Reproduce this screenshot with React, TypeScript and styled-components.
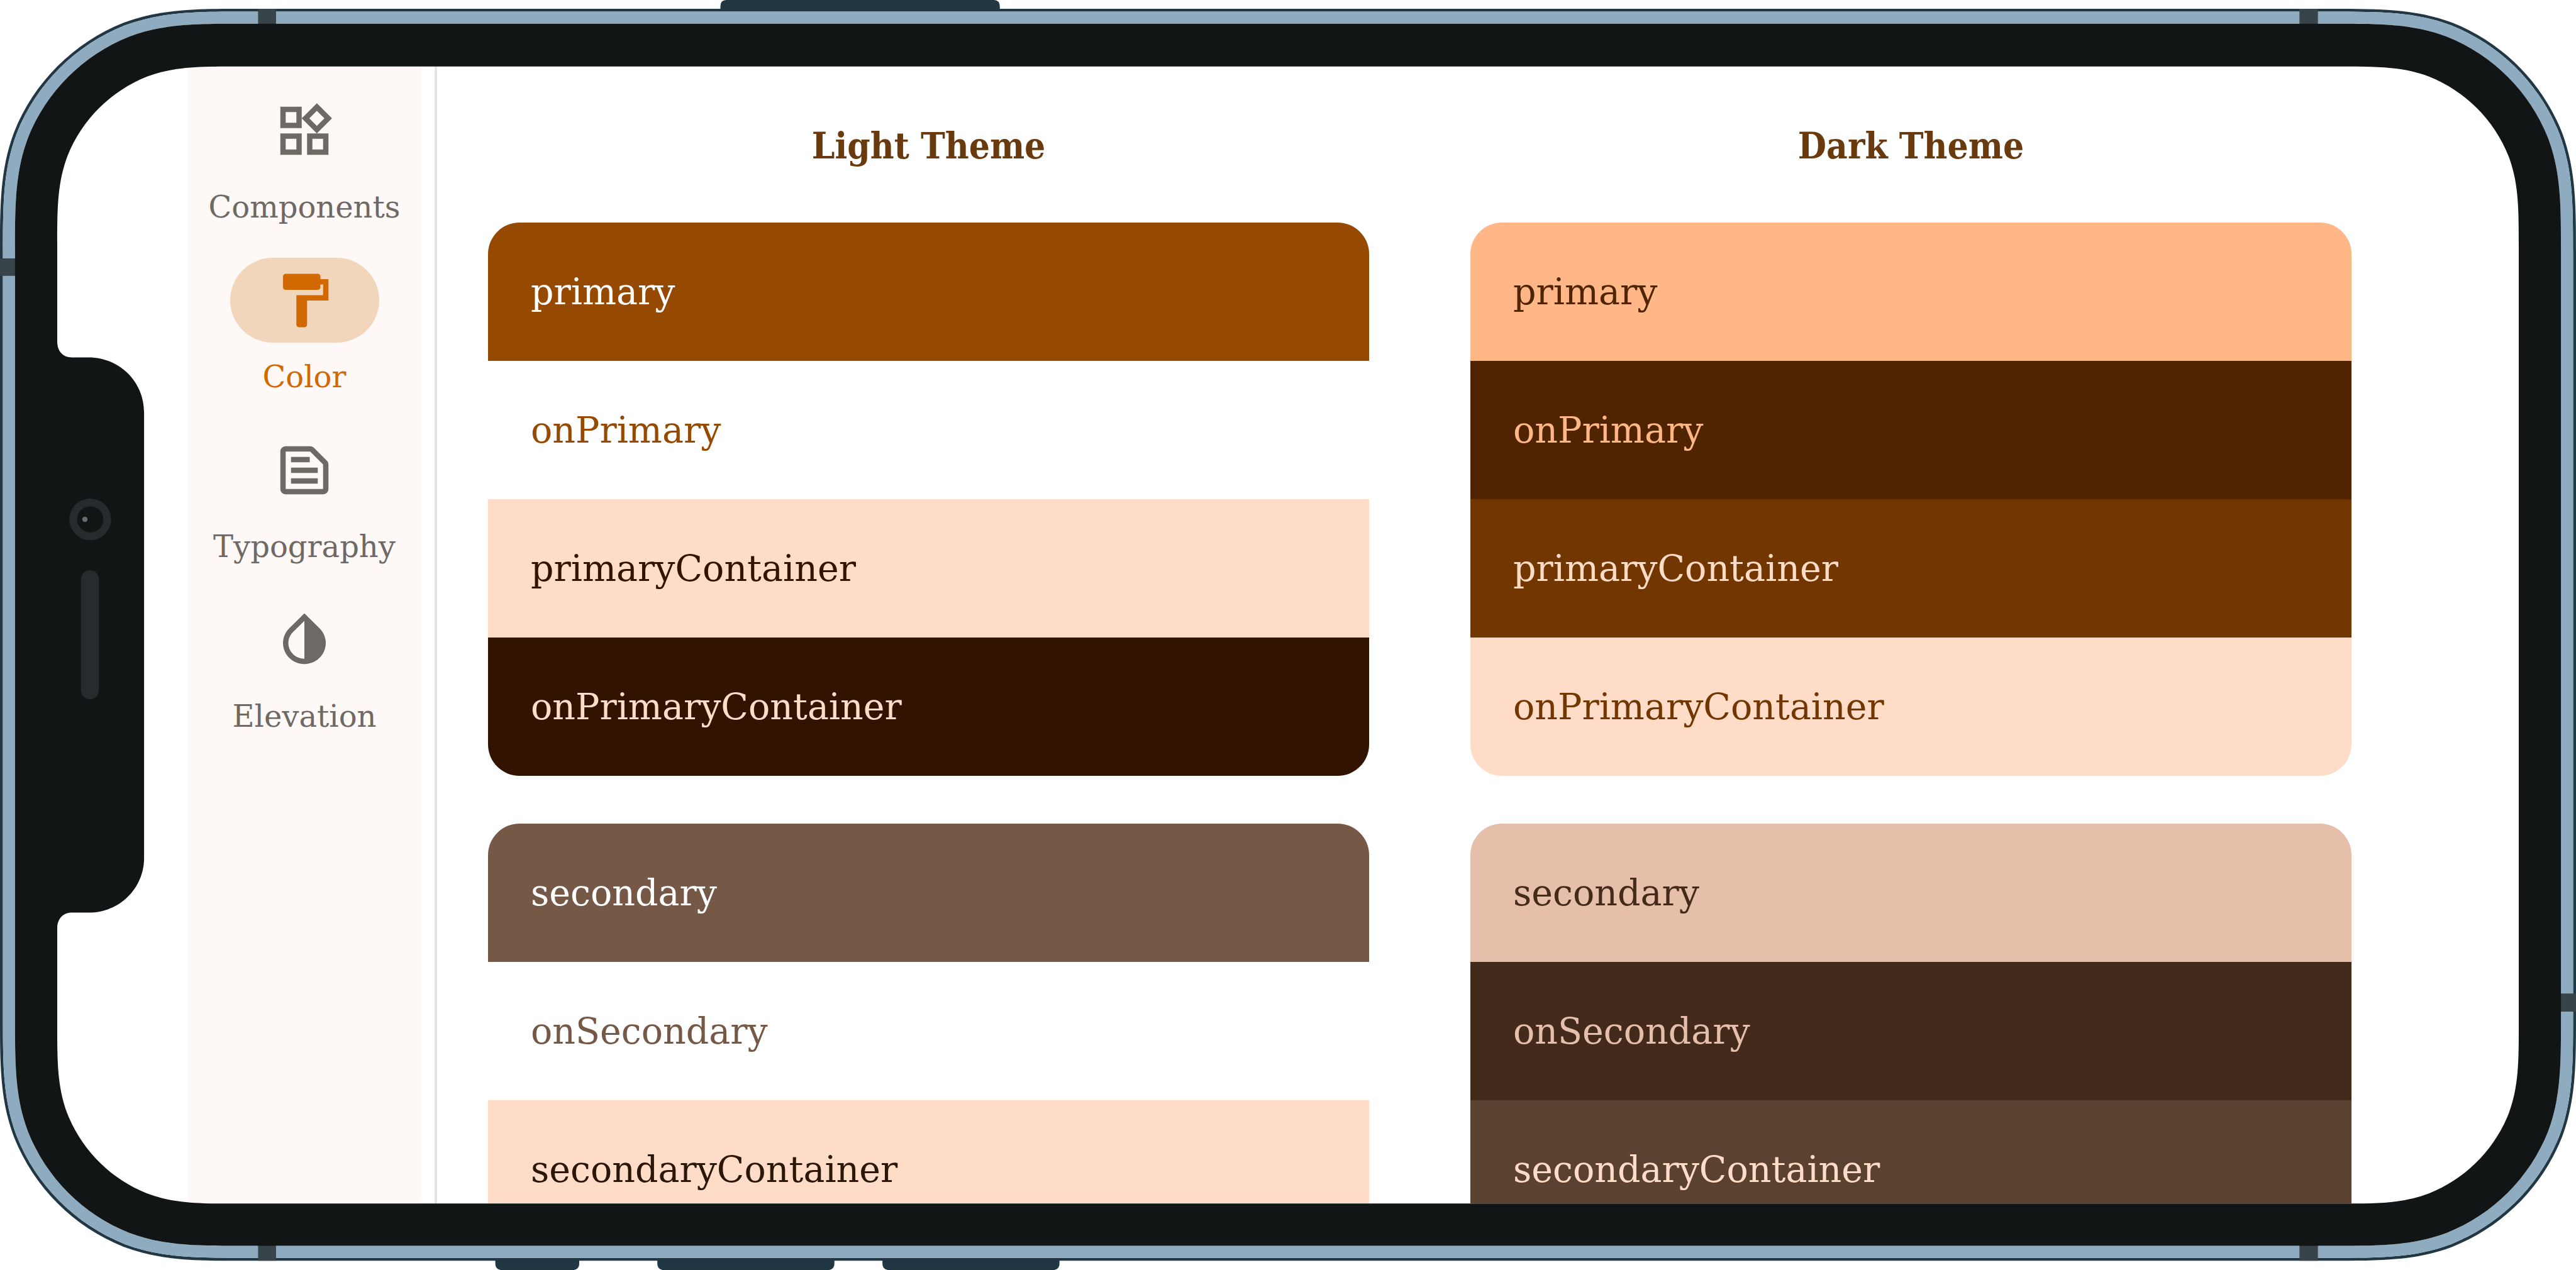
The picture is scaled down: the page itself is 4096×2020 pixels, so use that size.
import React from "react";
import styled, { createGlobalStyle } from "styled-components";

const GlobalStyle = createGlobalStyle`
  *, *::before, *::after { box-sizing: border-box; }
  body {
    margin: 0;
    overflow: hidden;
    background: #ffffff;
    font-family: "DejaVu Serif", serif;
  }
`;

const Device = styled.div`
  position: relative;
  display: flex;
  width: 100%;
  aspect-ratio: 4096 / 2020;
  padding: 106px 91px;
`;

const Screen = styled.div`
  display: flex;
  flex: 1;
  min-width: 0;
  height: 100%;
  padding-left: 207px;
  overflow: hidden;
  background: #ffffff;
`;

const FrameArt = styled.svg`
  position: absolute;
  inset: 0;
  width: 100%;
  height: 100%;
  pointer-events: none;
`;

const Rail = styled.nav`
  display: flex;
  flex-direction: column;
  flex: none;
  width: 372px;
  padding-top: 34px;
  background: #fef9f6;
`;

const RailButton = styled.button<{ $active?: boolean }>`
  display: flex;
  flex-direction: column;
  align-items: center;
  height: 270px;
  padding: 0;
  border: 0;
  background: none;
  color: ${(p) => (p.$active ? "#d26900" : "#6f6965")};
  font-family: inherit;
  font-size: 48px;
  line-height: 56px;
  white-space: nowrap;
  cursor: pointer;
`;

const Indicator = styled.span<{ $active?: boolean }>`
  display: flex;
  align-items: center;
  justify-content: center;
  width: 237px;
  height: 135px;
  margin-bottom: 26px;
  border-radius: 68px;
  background: ${(p) => (p.$active ? "#f2d6bb" : "transparent")};
`;

const Icon = styled.svg`
  display: block;
  width: 102px;
  height: 102px;
  fill: currentColor;
`;

const Divider = styled.div`
  flex: none;
  width: 4px;
  margin-left: 21px;
  background: #e3e4e4;
`;

const Themes = styled.main`
  display: grid;
  grid-template-columns: 1fr 1fr;
  gap: 161px;
  flex: 1;
  min-width: 0;
  padding: 88px 266px 0 81px;
`;

const Column = styled.section`
  display: flex;
  flex-direction: column;
  gap: 76px;
`;

const Heading = styled.h2`
  margin: 0 0 8px;
  color: #693a0d;
  font-family: "DejaVu Serif Condensed", "DejaVu Serif", serif;
  font-size: 58px;
  font-weight: 700;
  line-height: 76px;
  text-align: center;
`;

const Card = styled.ul`
  flex: none;
  margin: 0;
  padding: 0;
  border-radius: 50px;
  overflow: hidden;
  list-style: none;
`;

const Swatch = styled.li<{ $bg: string; $fg: string }>`
  display: flex;
  align-items: center;
  height: 220px;
  padding: 0 68px;
  background: ${(p) => p.$bg};
  color: ${(p) => p.$fg};
  font-size: 57px;
  line-height: 68px;
`;

type Tone = { name: string; bg: string; fg: string };
type Theme = { title: string; groups: Tone[][] };

const themes: Theme[] = [
  {
    title: "Light Theme",
    groups: [
      [
        { name: "primary", bg: "#964900", fg: "#ffffff" },
        { name: "onPrimary", bg: "#ffffff", fg: "#964900" },
        { name: "primaryContainer", bg: "#ffdcc7", fg: "#311300" },
        { name: "onPrimaryContainer", bg: "#311300", fg: "#ffdcc7" },
      ],
      [
        { name: "secondary", bg: "#755846", fg: "#ffffff" },
        { name: "onSecondary", bg: "#ffffff", fg: "#755846" },
        { name: "secondaryContainer", bg: "#ffdcc7", fg: "#2b1708" },
      ],
    ],
  },
  {
    title: "Dark Theme",
    groups: [
      [
        { name: "primary", bg: "#ffb787", fg: "#502400" },
        { name: "onPrimary", bg: "#502400", fg: "#ffb787" },
        { name: "primaryContainer", bg: "#723600", fg: "#ffdcc7" },
        { name: "onPrimaryContainer", bg: "#ffdcc7", fg: "#723600" },
      ],
      [
        { name: "secondary", bg: "#e5bfa9", fg: "#432a1b" },
        { name: "onSecondary", bg: "#432a1b", fg: "#e5bfa9" },
        { name: "secondaryContainer", bg: "#5b4130", fg: "#ffdcc7" },
      ],
    ],
  },
];

const railItems = [
  {
    label: "Components",
    path: "M16.66 4.52l2.83 2.83-2.83 2.83-2.83-2.83 2.83-2.83M9 5v4H5V5h4m10 10v4h-4v-4h4M9 15v4H5v-4h4m7.66-13.31L11 7.34 16.66 13l5.66-5.66-5.66-5.65zM11 3H3v8h8V3zm10 10h-8v8h8v-8zm-10 0H3v8h8v-8z",
  },
  {
    label: "Color",
    active: true,
    path: "M18 4V3c0-.55-.45-1-1-1H5c-.55 0-1 .45-1 1v4c0 .55.45 1 1 1h12c.55 0 1-.45 1-1V6h1v4H9v11c0 .55.45 1 1 1h2c.55 0 1-.45 1-1v-9h8V4h-3z",
  },
  {
    label: "Typography",
    path: "M14.17 5L19 9.83V19H5V5h9.17m0-2H5c-1.1 0-2 .9-2 2v14c0 1.1.9 2 2 2h14c1.1 0 2-.9 2-2V9.83c0-.53-.21-1.04-.59-1.41l-4.83-4.83c-.37-.38-.88-.59-1.41-.59zM7 15h10v2H7v-2zm0-4h10v2H7v-2zm0-4h7v2H7V7z",
  },
  {
    label: "Elevation",
    path: "M12 4.81V19c-3.31 0-6-2.63-6-5.87 0-1.56.62-3.03 1.75-4.14L12 4.81M6.35 7.56C4.9 8.99 4 10.96 4 13.13 4 17.48 7.58 21 12 21s8-3.52 8-7.87c0-2.17-.9-4.14-2.35-5.57L12 2 6.35 7.56z",
  },
];

/* Rounded rectangle whose corners ease into the straight edges, as on the phone body. */
function squircle(l: number, t: number, r: number, b: number, radius: number): string {
  const steps = [
    [1.25, 0],
    [1, 0],
    [0.82, 0],
    [0.63, 0.071],
    [0.3745, 0.1727],
    [0.1727, 0.3745],
    [0.071, 0.63],
    [0, 0.82],
    [0, 1],
    [0, 1.25],
  ];
  const corner = (cx: number, cy: number, sx: number, sy: number, reverse: boolean) => {
    const list = reverse ? [...steps].reverse() : steps;
    const p = list.map(([x, y]) => `${(cx + sx * x * radius).toFixed(1)} ${(cy + sy * y * radius).toFixed(1)}`);
    return `${p[0]} C${p[1]} ${p[2]} ${p[3]} C${p[4]} ${p[5]} ${p[6]} C${p[7]} ${p[8]} ${p[9]}`;
  };
  return (
    `M${corner(l, t, 1, 1, false)} L${corner(l, b, 1, -1, true)} ` +
    `L${corner(r, b, -1, -1, false)} L${corner(r, t, -1, 1, true)} Z`
  );
}

const outline = squircle(0, 18, 5310, 2600, 405);
const body = squircle(6, 24, 5304, 2594, 399);
const bezel = squircle(31, 49, 5279, 2569, 374);
const display = squircle(118, 137, 5192, 2482, 294);

function Frame() {
  return (
    <FrameArt viewBox="0 0 5310 2619" preserveAspectRatio="none" aria-hidden="true">
      <path fill="#213744" d="M1485 22V14Q1485 0 1497 0H2049Q2061 0 2061 14V22Z" />
      <path
        fill="#213744"
        d="M1021 2598V2605Q1021 2619 1035 2619H1180Q1194 2619 1194 2605V2598ZM1355 2598V2605Q1355 2619 1369 2619H1706Q1720 2619 1720 2605V2598ZM1819 2598V2605Q1819 2619 1833 2619H2170Q2184 2619 2184 2605V2598Z"
      />
      <path fill="#213744" fillRule="evenodd" d={`${outline} ${body}`} />
      <path fill="#8eabc0" fillRule="evenodd" d={`${body} ${bezel}`} />
      <path
        fill="#37444a"
        d="M532 18H569V50H532ZM4740 18H4778V50H4740ZM532 2568H569V2600H532ZM4740 2568H4778V2600H4740ZM0 533H32V569H0ZM5278 2049H5310V2086H5278Z"
      />
      <path fill="#111516" fillRule="evenodd" d={`${bezel} ${display}`} />
      <path
        fill="#111516"
        d="M110 705H118C118 724 130 737 148 737H183C246 737 297 787 297 850V1769C297 1832 246 1882 183 1882H148C130 1882 118 1895 118 1914H110Z"
      />
      <circle cx="186" cy="1071" r="43" fill="#272b2d" />
      <circle cx="186" cy="1071" r="27" fill="#111516" />
      <circle cx="175" cy="1071" r="5.5" fill="#636e74" />
      <rect x="167" y="1176" width="37" height="266" rx="18.5" fill="#272b2d" />
    </FrameArt>
  );
}

export default function App() {
  return (
    <>
      <GlobalStyle />
      <Device>
        <Screen>
          <Rail aria-label="Sections">
            {railItems.map((item) => (
              <RailButton key={item.label} type="button" $active={item.active} aria-pressed={!!item.active}>
                <Indicator $active={item.active}>
                  <Icon viewBox="0 0 24 24" aria-hidden="true">
                    <path d={item.path} />
                  </Icon>
                </Indicator>
                {item.label}
              </RailButton>
            ))}
          </Rail>
          <Divider />
          <Themes>
            {themes.map((theme) => (
              <Column key={theme.title}>
                <Heading>{theme.title}</Heading>
                {theme.groups.map((group) => (
                  <Card key={group[0].name}>
                    {group.map((tone) => (
                      <Swatch key={tone.name} $bg={tone.bg} $fg={tone.fg}>
                        {tone.name}
                      </Swatch>
                    ))}
                  </Card>
                ))}
              </Column>
            ))}
          </Themes>
        </Screen>
        <Frame />
      </Device>
    </>
  );
}
